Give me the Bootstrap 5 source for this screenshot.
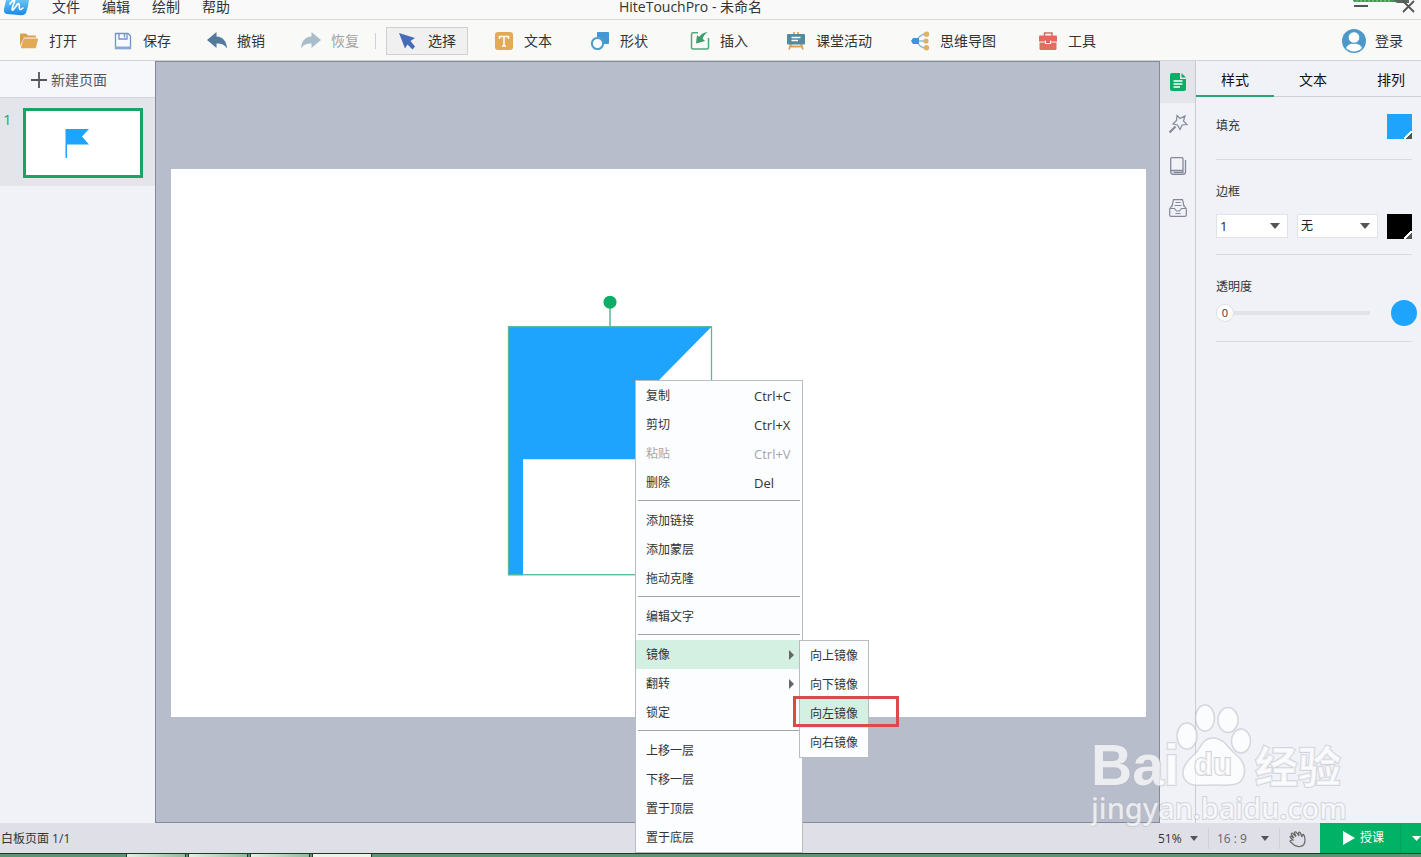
<!DOCTYPE html>
<html lang="zh-CN">
<head>
<meta charset="utf-8">
<meta name="viewport" content="width=device-width, initial-scale=1">
<title>HiteTouchPro - 未命名</title>
<link href="https://cdn.jsdelivr.net/npm/bootstrap@5.3.0/dist/css/bootstrap.min.css" rel="stylesheet">
<style>
  :root { --line:#d3d5dc; --panel:#f0f2f8; --green:#00b265; --blue:#1ea4fc; --mint:#d4f0e3; }
  body { font-family:"Open Sans","Noto Sans CJK SC",sans-serif; font-size:12px; line-height:18px; color:#333; background:var(--panel); overflow:hidden; }
  button, select { font:inherit; color:inherit; }
  button { background:none; border:0; padding:0; }
  svg { display:block; flex:none; }
  .app-shell { min-height:100vh; }

  .title-strip { height:20px; background:#f9f9f9; border-bottom:1px solid #d9d9d9; font-size:14px; line-height:14px; }
  .title-strip .menus { gap:22px; padding-left:4px; }
  .title-strip a { color:#333; text-decoration:none; }
  .window-buttons { width:270px; padding-right:6px; }

  .tool-strip { height:41px; background:#f9f9f8; border-bottom:1px solid #d2d3d8; font-size:14px; padding:2px 18px 0 7px; }
  .tool-btn { display:flex; align-items:center; gap:10px; height:28px; padding:0 11px; border:1px solid transparent; white-space:nowrap; line-height:20px; }
  .tool-btn:disabled { color:#a3a3a3; }
  .tool-btn.current { background:#f0f0f0; border-color:#d0d0d0; }
  .tool-set-a { gap:12px; }
  .tool-set-b { gap:14px; margin-left:10px; }
  .v-line { width:1px; background:#d0d1d6; }
  .tool-strip .v-line { height:16px; }

  .page-list { width:155px; background:var(--panel); }
  .new-page { height:37px; width:100%; background:#f5f7fb; border-bottom:1px solid var(--line); font-size:14px; color:#555; gap:3px; padding:2px 18px 0 0; }
  .page-row { background:#e4e5eb; padding:10px 12px 8px 3px; }
  .page-row .num { width:20px; font-size:15px; line-height:22px; color:#1fa765; }
  .page-thumb { border:3px solid #17a566; height:70px; background:#fff; }

  .stage { background:#b8bdcc; border:1px solid #858a9b; padding:2px 13px 0 15px; min-width:0; }
  .slide { background:#fff; aspect-ratio:16/9; width:100%; }
  .slide > svg { width:100%; height:100%; }

  .ctx-menu, .ctx-sub { position:absolute; background:#fbfdfe; border:1px solid #b9bcc2; z-index:5; }
  .ctx-menu { left:464px; top:211px; width:168px; }
  .ctx-sub { left:163px; top:0; width:70px; }
  .ctx-row { display:flex; align-items:center; width:100%; height:29px; padding:2px 10px 0 10px; text-align:left; white-space:nowrap; }
  .ctx-menu .ctx-row.chosen { background:var(--mint); }
  .ctx-row:disabled { color:#a5a5a5; }
  .ctx-row kbd { all:unset; margin-left:auto; width:38px; font-size:13px; }
  .ctx-menu hr { margin:3px 2px 5px; border-top:1px solid #a0a3a8; opacity:1; }
  .ctx-arrow { margin-left:auto; margin-right:-2px; border:solid transparent; border-width:5px 0 5px 5px; border-left-color:#666; }
  .callout { position:absolute; left:-7px; top:55px; width:106px; height:31px; border:3px solid #d84b4b; pointer-events:none; }

  .side-rail { width:36px; background:var(--panel); border-right:1px solid #c9cbd6; }
  .side-rail button { height:42px; width:100%; display:flex; align-items:center; justify-content:center; }
  .side-rail button.current { background:#e4e5eb; }

  .prop-panel { width:225px; overflow:hidden; }
  .prop-tabs { height:36px; border-bottom:1px solid #cfd1d9; font-size:14px; color:#111; }
  .prop-tabs button { flex:0 0 78px; height:36px; padding-top:3px; border-bottom:2px solid transparent; }
  .prop-tabs button.current { border-bottom-color:#2aa375; }
  .prop-body { padding:0 9px 0 20px; }
  .prop-group { border-bottom:1px solid #d8dae1; padding:23px 0 15px; }
  .prop-group:first-child { padding:17px 0 20px; }
  .prop-group:first-child span { line-height:24px; }
  .border-row { gap:9px; padding-top:13px; }
  .swatch { width:25px; height:25px; position:relative; flex:none; }
  .swatch::after { content:""; position:absolute; right:0; bottom:0; width:8px; height:8px; background:linear-gradient(135deg,transparent 42%,#fff 42% 58%,#555 58%); }
  .line-select { height:24px; border:1px solid #e0e2e8; border-radius:0; padding:0 3px; appearance:none; background:#fff url("data:image/svg+xml,%3Csvg xmlns='http://www.w3.org/2000/svg' width='10' height='6'%3E%3Cpath d='M0 0h10L5 6z' fill='%23555'/%3E%3C/svg%3E") no-repeat right 7px center; min-width:0; color:#222; }
  .weight-pick { width:72px; font-size:13px; }
  .opacity-slider { width:154px; }
  .opacity-slider input { appearance:none; width:100%; height:18px; margin:0; display:block; background:linear-gradient(#e2e3e8,#e2e3e8) center/100% 4px no-repeat; }
  .opacity-slider input::-webkit-slider-thumb { appearance:none; width:18px; height:18px; border-radius:50%; background:#fff; border:1px solid #dddfe4; }
  .opacity-slider output { position:absolute; left:0; top:0; width:18px; text-align:center; font-size:11px; pointer-events:none; }
  .opacity-dot { width:26px; height:26px; border-radius:50%; background:var(--blue); margin-right:-5px; }

  .status-strip { height:30px; background:#dedfe7; padding:1px 0 0 1px; }
  .status-strip select { appearance:none; border:0; border-radius:0; height:20px; padding:0 16px 0 0; background:url("data:image/svg+xml,%3Csvg xmlns='http://www.w3.org/2000/svg' width='8' height='5'%3E%3Cpath d='M0 0h8L4 5z' fill='%23555'/%3E%3C/svg%3E") no-repeat right 2px center; }
  .status-strip .v-line { height:21px; }
  .zoom-pick { width:42px; }
  .ratio-pick { width:54px; color:#666; }
  .teach { background:var(--green); color:#fff; width:101px; height:30px; margin-top:-1px; }
  .teach > button:first-child { gap:5px; }
  .teach > button:last-child { width:20px; }
  .teach .v-line { background:#07a05c; height:30px; }

  .os-bar { height:4px; background:#5c9474; border-top:1px solid #1d3b2b; padding-left:126px; gap:2px; }
  .os-bar span { width:60px; height:3px; background:linear-gradient(90deg,#e3f0e4,#8fbb9c); border:solid #1d3b2b; border-width:0 1px; }
  .os-bar span:last-child { background:#edf5ea; }

  .site-mark { position:absolute; right:70px; bottom:30px; z-index:3; pointer-events:none; }
  .site-mark text { paint-order:stroke; }
</style>
</head>
<body>
<div class="app-shell d-flex flex-column position-relative">

  <header class="title-strip d-flex">
    <nav class="menus d-flex">
      <svg width="26" height="16" viewBox="0 0 26 16"><defs><linearGradient id="lg" x2="0" y2="1"><stop stop-color="#69c4f6"/><stop offset="1" stop-color="#1688e8"/></linearGradient></defs><path d="M2 0H25Q24 8 22 13Q20 16 15 15L3 14Q-1 13 0 9Z" fill="url(#lg)"/><path d="M6 4C9 -1 12 -1 10 3C9 6 7 11 9 10C12 7 14 2 15 4C16 7 14 12 19 8" fill="none" stroke="#fff" stroke-width="1.6" stroke-linecap="round"/></svg>
      <a href="#">文件</a><a href="#">编辑</a><a href="#">绘制</a><a href="#">帮助</a>
    </nav>
    <div class="flex-grow-1 text-center">HiteTouchPro - 未命名</div>
    <div class="window-buttons d-flex justify-content-end">
      <svg width="64" height="14" viewBox="0 0 64 14"><path d="M2 0H58V2H5Q2 2 2 0Z" fill="#3e9b55"/><path d="M42 0H58V3H46Z" fill="#5b665e"/><path d="M6 0V2M10 0V2M14 0V2M18 0V2M22 0V2M26 0V2M30 0V2M34 0V2M38 0V2" stroke="#8cd09a"/><path d="M3 6H17" stroke="#555" stroke-width="2"/><path d="M52 1L63 12M63 1L52 12" stroke="#555" stroke-width="1.8"/></svg>
    </div>
  </header>

  <div class="tool-strip d-flex align-items-center">
    <div class="tool-set-a d-flex">
      <button class="tool-btn"><svg width="20" height="20" viewBox="0 0 20 20"><path d="M1 15V3.500Q1 2.500 2 2.500H7L9 4.500H16Q17 4.500 17 5.500V6.500H5Z" fill="#d9a04f"/><path d="M5.500 7.500H18.500Q19.300 7.500 19 8.500L17 16.500Q16.800 17.300 16 17.300H2.500Q1.700 17.300 2 16.300L4.400 8.300Q4.700 7.500 5.500 7.500Z" fill="#e2a957"/></svg>打开</button>
      <button class="tool-btn"><svg width="20" height="20" viewBox="0 0 20 20"><path d="M2.500 2.500H15L17.500 5V17.500H2.500Z" fill="#f7faff" stroke="#7194c9" stroke-width="1.300"/><path d="M6 2V8H14V2" fill="none" stroke="#7194c9" stroke-width="1.300"/><path d="M11.500 3V6.500" stroke="#7194c9" stroke-width="1.300"/><path d="M2 15.500H18V18H2Z" fill="#89a8d5"/></svg>保存</button>
      <button class="tool-btn"><svg width="20" height="20" viewBox="0 0 20 20"><path d="M0 9L9.500 1V5.500C16 6 19.500 10 20 17.500C17.500 13.500 14.500 12.500 9.500 12.500V17Z" fill="#527b9d"/></svg>撤销</button>
      <button class="tool-btn" disabled><svg width="20" height="20" viewBox="0 0 20 20"><path d="M20 9L10.500 1V5.500C4 6 .5 10 0 17.500C2.500 13.500 5.500 12.500 10.500 12.500V17Z" fill="#a9bcca"/></svg>恢复</button>
    </div>
    <span class="v-line ms-1"></span>
    <div class="tool-set-b d-flex">
      <button class="tool-btn current"><svg width="20" height="20" viewBox="0 0 20 20"><path d="M1 2L17 7L12.500 10L17 15.500L14.500 18.500L9.500 13.500L7 17.500Z" fill="#466bb8"/></svg>选择</button>
      <button class="tool-btn"><svg width="20" height="20" viewBox="0 0 20 20"><rect x="1" y="1" width="18" height="18" rx="3" fill="#e2a957"/><path d="M5.500 8V5.500H14.500V8M10 5.500V15M8 15H12" fill="none" stroke="#fff" stroke-width="1.500"/></svg>文本</button>
      <button class="tool-btn"><svg width="20" height="20" viewBox="0 0 20 20"><path d="M7 1.500Q7 1 8 1H18Q19 1 19 2V12Q19 13 18 13H14A7 7 0 0 0 7 6Z" fill="#4597d3"/><circle cx="7.500" cy="12.500" r="5.600" fill="#fff" stroke="#4a9cc9" stroke-width="2"/></svg>形状</button>
      <button class="tool-btn ms-1"><svg width="20" height="20" viewBox="0 0 20 20"><path d="M8 1.800H3Q1.500 1.800 1.500 3.500V16.500Q1.500 18 3 18H17Q18.500 18 18.500 16.500V7" fill="none" stroke="#4aaa7a" stroke-width="1.500"/><path d="M18 .8C15.500 2 14 4.500 12.500 7.500L15 10L6 12.500L7 4L9 6C11 3 14 1.500 18 .8Z" fill="#3d9c6a"/></svg>插入</button>
      <button class="tool-btn"><svg width="20" height="20" viewBox="0 0 20 20"><path d="M8 1V4M12 1V4M5 13L3 18.500M15 13L17 18.500M3 15.500H17" stroke="#dba454" stroke-width="1.800"/><rect x="1" y="3" width="18" height="10.500" rx="1" fill="#55899c"/><path d="M5.500 6.500H14.500M5.500 9.500H12" stroke="#fff" stroke-width="1.300"/></svg>课堂活动</button>
      <button class="tool-btn"><svg width="20" height="20" viewBox="0 0 20 20"><path d="M16 3C11 3 9 6 7 9M7 10H15M7 11C9 14 11 17 16 17" fill="none" stroke="#89bddc" stroke-width="1.300"/><path d="M1 10L3 7H9V13H3Z" fill="#3a96d9"/><g fill="#ddb262"><circle cx="16.500" cy="3.200" r="2.700"/><circle cx="16" cy="10" r="2.600"/><circle cx="16.500" cy="16.800" r="2.700"/></g></svg>思维导图</button>
      <button class="tool-btn ms-1"><svg width="20" height="20" viewBox="0 0 20 20"><path d="M6.500 5V2H14V5" fill="none" stroke="#d16c63" stroke-width="1.500"/><path d="M2 4.500H18Q19 4.500 19 5.500V10.500H1V5.500Q1 4.500 2 4.500Z" fill="#e4685e"/><path d="M1.500 11.500H18.500V17.500Q18.500 19 17 19H3Q1.500 19 1.500 17.500Z" fill="#e56e63"/><path d="M7 9.500H13V13H7Z" fill="#fff"/><path d="M8 9H12V12H8Z" fill="#df655c"/></svg>工具</button>
    </div>
    <button class="ms-auto d-flex align-items-center gap-2"><svg width="26" height="26" viewBox="0 0 26 26"><circle cx="13" cy="13" r="12" fill="#4c98c9"/><path d="M5 20Q7 15.500 13 15.500T21 20A11 11 0 0 1 5 20Z" fill="#fff"/><circle cx="13" cy="9.500" r="5.800" fill="#fff" stroke="#4c98c9"/></svg>登录</button>
  </div>

  <main class="d-flex flex-grow-1">
    <aside class="page-list flex-shrink-0">
      <button class="new-page d-flex align-items-center justify-content-center"><svg width="18" height="18" viewBox="0 0 18 18"><path d="M9 1V17M1 9H17" stroke="#555" stroke-width="1.800"/></svg>新建页面</button>
      <div class="page-row d-flex">
        <span class="num">1</span>
        <div class="page-thumb flex-grow-1"><svg width="114" height="64" viewBox="0 0 114 64"><path d="M39.500 18H63L56 25.500L63 33.500H41V47H39.500Z" fill="#1ea4fc"/></svg></div>
      </div>
    </aside>

    <section class="stage flex-grow-1 d-flex align-items-center">
      <div class="slide position-relative">
        <svg viewBox="0 0 975 548">
          <path d="M337 157H541L475 224L541 290L352 290V406H337Z" fill="#1ea4fc"/>
          <rect x="337.500" y="157.500" width="203" height="248" fill="none" stroke="#55b99b" stroke-width="1.300"/>
          <path d="M439 157V134" stroke="#55b99b" stroke-width="1.500"/>
          <circle cx="439" cy="133" r="6.500" fill="#0bae67"/>
        </svg>
        <div class="ctx-menu">
          <button class="ctx-row">复制<kbd>Ctrl+C</kbd></button>
          <button class="ctx-row">剪切<kbd>Ctrl+X</kbd></button>
          <button class="ctx-row" disabled>粘贴<kbd>Ctrl+V</kbd></button>
          <button class="ctx-row">删除<kbd>Del</kbd></button>
          <hr>
          <button class="ctx-row">添加链接</button>
          <button class="ctx-row">添加蒙层</button>
          <button class="ctx-row">拖动克隆</button>
          <hr>
          <button class="ctx-row">编辑文字</button>
          <hr>
          <div class="position-relative">
            <button class="ctx-row chosen">镜像<span class="ctx-arrow"></span></button>
            <div class="ctx-sub">
              <button class="ctx-row">向上镜像</button>
              <button class="ctx-row">向下镜像</button>
              <button class="ctx-row chosen">向左镜像</button>
              <button class="ctx-row">向右镜像</button>
              <span class="callout"></span>
            </div>
          </div>
          <button class="ctx-row">翻转<span class="ctx-arrow"></span></button>
          <button class="ctx-row">锁定</button>
          <hr>
          <button class="ctx-row">上移一层</button>
          <button class="ctx-row">下移一层</button>
          <button class="ctx-row">置于顶层</button>
          <button class="ctx-row">置于底层</button>
        </div>
      </div>
    </section>

    <nav class="side-rail flex-shrink-0">
      <button class="current" aria-label="属性"><svg width="18" height="20" viewBox="0 0 18 20"><path d="M3 1H11V7H17V17Q17 19 15 19H3Q1 19 1 17V3Q1 1 3 1Z" fill="#0bae67"/><path d="M12.500 1L17 5.500H12.500Z" fill="#0bae67"/><path d="M4.500 9H13.500M4.500 12H13.500M4.500 15H11" stroke="#fff" stroke-width="1.300"/></svg></button>
      <button aria-label="特效"><svg width="20" height="20" viewBox="0 0 20 20"><path d="M9 1.500L12 4.500L17 2L15.500 7L19 10.500L14 11L12 15.500L9.500 11L5 10L8.500 6.500Z" fill="none" stroke="#85889a" stroke-width="1.200"/><path d="M7.500 12.500L1.500 18.500" stroke="#85889a" stroke-width="2.200"/></svg></button>
      <button aria-label="资源"><svg width="18" height="20" viewBox="0 0 18 20"><path d="M3 1.700H13Q14 1.700 14 2.700V14.500H3Q1.700 14.500 1.700 16V3Q1.700 1.700 3 1.700ZM1.700 15.500Q1.700 18.300 4 18.300H14Q16.500 18.300 16.500 16V4M4.500 16.500H14V14.500" fill="none" stroke="#85889a" stroke-width="1.300"/></svg></button>
      <button aria-label="素材库"><svg width="20" height="20" viewBox="0 0 20 20"><path d="M4 8.500L5.500 1.700H14.500L16 8.500M4 7.500L1.700 11V17Q1.700 18.300 3 18.300H17Q18.300 18.300 18.300 17V11L16 7.500M1.700 10.500H6.500L8.500 13H11.500L13.500 10.500H18.300M7.500 4.500H12.500M6.500 7.500H13.500M7.500 15.500H12.500" fill="none" stroke="#85889a" stroke-width="1.200"/></svg></button>
    </nav>

    <aside class="prop-panel flex-shrink-0">
      <div class="prop-tabs d-flex"><button class="current">样式</button><button>文本</button><button>排列</button></div>
      <div class="prop-body">
        <div class="prop-group d-flex justify-content-between align-items-start">
          <span>填充</span><button class="swatch" style="background:#1ea4fc" aria-label="填充颜色"></button>
        </div>
        <div class="prop-group">
          <label class="d-block" for="weight">边框</label>
          <div class="border-row d-flex align-items-start">
            <select class="line-select weight-pick" id="weight"><option>1</option></select>
            <select class="line-select flex-grow-1" aria-label="线型"><option>无</option></select>
            <button class="swatch" style="background:#000" aria-label="边框颜色"></button>
          </div>
        </div>
        <div class="prop-group">
          <label class="d-block" for="alpha">透明度</label>
          <div class="d-flex align-items-center justify-content-between pt-1">
            <div class="opacity-slider position-relative"><input type="range" id="alpha" min="0" max="100" value="0"><output for="alpha">0</output></div>
            <span class="opacity-dot"></span>
          </div>
        </div>
      </div>
    </aside>
  </main>

  <footer class="status-strip d-flex align-items-center">
    <span class="me-auto">白板页面 1/1</span>
    <select class="zoom-pick" aria-label="缩放"><option>51%</option></select>
    <span class="v-line ms-2 me-2"></span>
    <select class="ratio-pick" aria-label="页面比例"><option>16 : 9</option></select>
    <span class="v-line ms-2 me-1"></span>
    <button class="ms-1 me-2 pe-1" aria-label="漫游"><svg width="20" height="20" viewBox="0 0 20 20"><path d="M5 11L2.500 8.500Q1.500 7 3 7L6 9L3.500 5.500Q3 4 4.500 4L8 7.500L6.500 4Q6.500 2.500 8 3L11 7L10.500 4Q11 2.500 12.300 3.700L14 8Q14 5 15.500 5.500Q17 7 17 11Q17 17 12 17.500Q7 18 4.500 14.500L2 12.500Q2 11 5 11Z" fill="none" stroke="#666" stroke-width="1.200"/></svg></button>
    <div class="teach d-flex align-items-center">
      <button class="d-flex align-items-center flex-grow-1 justify-content-end pe-3 text-white"><svg width="13" height="14" viewBox="0 0 13 14"><path d="M1 0L13 7L1 14Z" fill="#fff"/></svg>授课</button>
      <span class="v-line"></span>
      <button class="d-flex justify-content-end" aria-label="更多"><svg width="9" height="5" viewBox="0 0 9 5"><path d="M0 0H9L4.500 5Z" fill="#fff"/></svg></button>
    </div>
  </footer>

  <div class="os-bar d-flex"><span></span><span></span><span></span><span></span></div>

  <svg class="site-mark" width="260" height="125" viewBox="0 0 260 125" fill="#fff" fill-opacity=".72" stroke="#b5b7c0" stroke-opacity=".5" stroke-width="2">
    <g stroke-width="1.500"><ellipse cx="96" cy="34" rx="10" ry="13"/><ellipse cx="114" cy="16" rx="9.500" ry="13"/><ellipse cx="137" cy="18" rx="10" ry="12.500"/><ellipse cx="150" cy="39" rx="9.500" ry="12"/>
    <path d="M122 36C133 36 137 46 144 52C152 58 156 66 152 76C148 85 135 83 122 83C109 83 98 86 93 76C89 66 97 58 104 52C110 46 111 36 122 36Z"/></g>
    <text x="0" y="83" font-family="Liberation Sans" font-weight="700" font-size="57">Bai</text>
    <text x="103" y="73" font-family="Liberation Sans" font-weight="700" font-size="31" stroke="#a9abb4">du</text>
    <text x="164" y="81" font-family="Noto Sans CJK SC" font-weight="700" font-size="43">经验</text>
    <text x="0" y="117" font-family="Noto Sans" font-weight="500" font-size="29">jingyan.baidu.com</text>
  </svg>
</div>
<script src="https://cdn.jsdelivr.net/npm/bootstrap@5.3.0/dist/js/bootstrap.bundle.min.js"></script>
</body>
</html>
